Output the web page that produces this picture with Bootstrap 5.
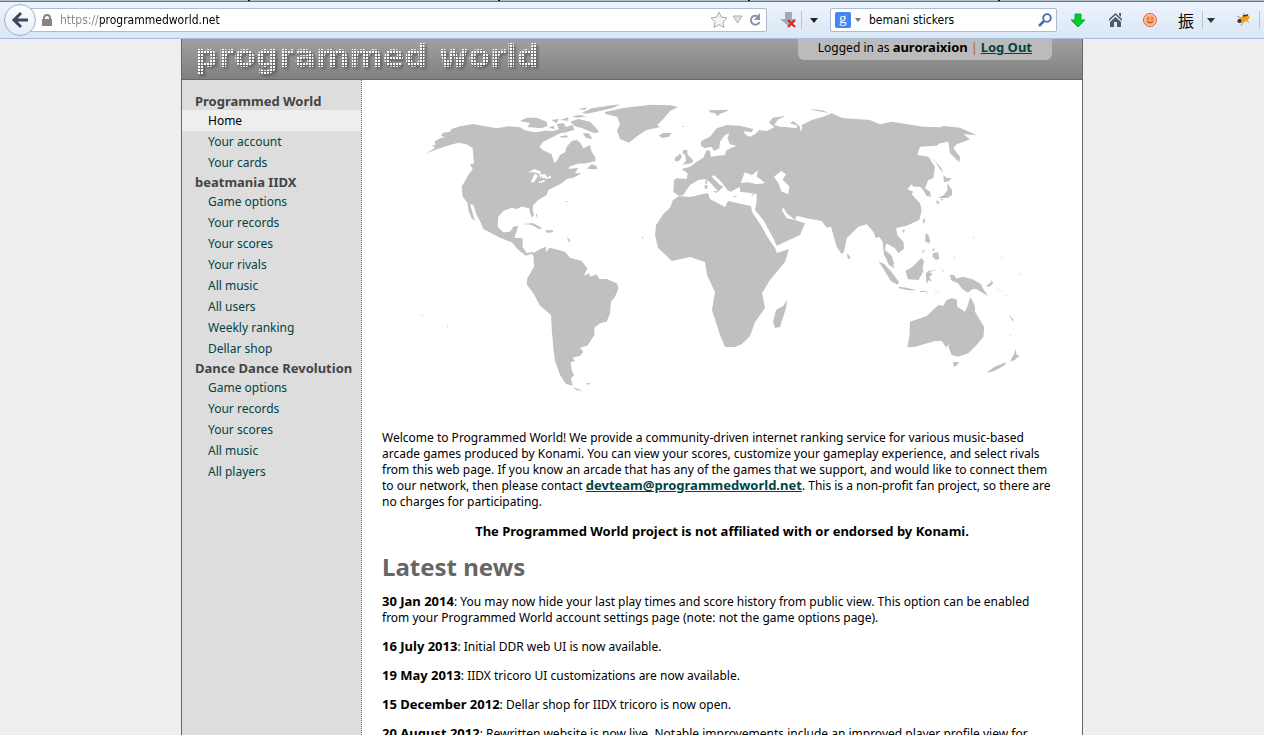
<!DOCTYPE html>
<html lang="en">
<head>
<meta charset="utf-8">
<meta name="viewport" content="width=device-width, initial-scale=1">
<title>Programmed World</title>
<link href="https://cdn.jsdelivr.net/npm/bootstrap@5.3.0/dist/css/bootstrap.min.css" rel="stylesheet">
<style>
body{font:12px/16px "Noto Sans",Tahoma,sans-serif;background:#eee;color:#000}
a{color:#044}
.chrome{height:39px;margin-top:-2px;padding:2px 0 0 4px;background:linear-gradient(#eef4fc,#dae7f6);border-bottom:1px solid #a5bedb;font-family:"DejaVu Sans Condensed",Tahoma,sans-serif}
.tabstrip{height:2px;background:#b4c4ce;border-bottom:1px solid #66727c;z-index:2}
.tabstrip i{width:250px;border-right:2px solid #10161c}
.tabstrip i:last-child{flex:1;border:0}
.chrome button{border:0;background:none;padding:0;line-height:0}
.chrome .back-btn{width:32px;height:32px;border:1px solid #9fb1c6;border-radius:50%;background:linear-gradient(#fdfeff,#e4edf8);z-index:1}
.field{height:24px;background:#fff;border:1px solid #a9bcd2;border-radius:2px}
.url-field{margin-left:-6px;padding:0 4px 0 11px}
.field input{border:0;outline:0;background:none;min-width:0;padding:0;line-height:20px;font-size:12px;color:#000}
.field .url-input{background:linear-gradient(90deg,#888 40px,#000 40px);-webkit-background-clip:text;background-clip:text;color:transparent}
.search-field{width:227px;padding:0 4px}
.rule{width:1px;height:18px;background:#b5c4d6}
.tools{width:207px;padding-left:14px}
.icon-gap{margin-right:20px}
.kanji{font:16px/20px "Noto Sans CJK JP",sans-serif}
.site{width:100%;max-width:902px;border:solid #666;border-width:0 1px;background:#fff}
.site-head{height:41px;padding-left:13px;background:linear-gradient(#a0a0a0,#808080);border-bottom:1px solid #666}
.logo{filter:drop-shadow(2px 2px 1px #444)}
.logo text{font:bold 32px "DejaVu Sans",sans-serif}
.site b,.site .strong-link{font-size:13px;line-height:1;font-weight:700}
.login{height:21px;margin-right:30px;padding:1px 20px 0;background:#bbb;border-radius:0 0 6px 6px}
.login span{color:#a60}
.side{width:180px;flex:none;background:#ddd;border-right:1px dotted #777;padding-top:12px}
.side h2{font-size:13px;line-height:18px;font-weight:700;color:#444;margin:0;padding-left:13px}
.side a{display:block;line-height:21px;padding-left:26px;text-decoration:none}
.side a.active{background:#eee;color:#000}
.main-col{padding:15px 20px 0}
.main-col p{margin-bottom:13px}
.main-col p:not(.notice){padding-right:7px}
.main-col .notice{font-size:13px;font-weight:700}
.main-col h1{font-size:24px;line-height:29px;font-weight:700;color:#666;margin-bottom:13px}
.map{width:100%;max-width:600px;margin-bottom:30px}
</style>
</head>
<body>
<div class="vh-100 d-flex flex-column overflow-hidden">
<div class="tabstrip d-flex flex-shrink-0"><i></i><i></i><i></i><i></i><i></i></div>
<header class="chrome d-flex align-items-center flex-shrink-0">
  <button class="back-btn flex-shrink-0" aria-label="Back"><svg width="18" height="18" viewBox="0 0 18 18" fill="none" stroke="#3d4a5c" stroke-width="3"><path d="M10 2 3 9l7 7M3 9h14"/></svg></button>
  <div class="field url-field d-flex align-items-center flex-grow-1">
    <svg class="flex-shrink-0 me-2" width="10" height="13" viewBox="0 0 10 13"><path d="M2 6V4a3 3 0 0 1 6 0v2" fill="none" stroke="#858585" stroke-width="2"/><path d="M0 5h10v7H0z" fill="#858585"/></svg>
    <input class="url-input flex-grow-1" aria-label="Address" value="https://programmedworld.net">
    <button aria-label="Bookmark"><svg width="18" height="18" viewBox="0 0 18 18"><path d="m9 1 2.4 5.2 5.6.7-4 3.9 1 5.7-5-2.8-5 2.8 1-5.7-4-3.9 5.6-.7z" fill="#f4f4f4" stroke="#aaa"/></svg></button>
    <button class="ms-1" aria-label="History"><svg width="12" height="10" viewBox="0 0 12 10"><path d="M1 1h9L5.500 8z" fill="#dde3ea" stroke="#a8b0ba"/></svg></button>
    <button class="ms-1" aria-label="Reload"><svg width="14" height="14" viewBox="0 0 14 14"><path d="M10 3.500A4.500 4.500 0 1 0 11.500 9" fill="none" stroke="#8796a5" stroke-width="2"/><path d="M12 0v7H6z" fill="#8796a5"/></svg></button>
  </div>
  <button class="ms-2 ps-1" aria-label="Downloads"><svg width="18" height="18" viewBox="0 0 18 18"><path d="M6 1h7v7h4l-7.500 7L1 8h5z" fill="#a4a9af"/><path d="m9 9 7 7m0-7-7 7" stroke="#e22" stroke-width="2.200"/></svg></button>
  <i class="rule ms-1"></i>
  <button class="mx-2" aria-label="More"><svg width="8" height="5"><path d="M0 0h8L4 5z" fill="#222"/></svg></button>
  <div class="field search-field d-flex align-items-center flex-shrink-0 ms-1">
    <svg class="flex-shrink-0" width="16" height="16"><rect width="16" height="16" rx="2" fill="#4285f4"/><text x="4" y="11" fill="#fff" font-size="15" font-family="Liberation Serif">g</text></svg>
    <svg class="flex-shrink-0 ms-1 me-2" width="6" height="4"><path d="M0 0h6L3 4z" fill="#777"/></svg>
    <input class="flex-grow-1" aria-label="Search" value="bemani stickers">
    <button aria-label="Search"><svg width="14" height="14" viewBox="0 0 14 14" fill="none" stroke="#3f72ad"><circle cx="9" cy="5" r="3.800" stroke-width="1.800"/><path d="m6 8-5 5" stroke-width="2.500"/></svg></button>
  </div>
  <div class="tools d-flex align-items-center flex-shrink-0">
    <button aria-label="Save"><svg width="14" height="15"><path d="M4 1h6v6h4l-7 7-7-7h4z" fill="#0c2" stroke="#0a4"/></svg></button>
    <button class="icon-gap ms-4" aria-label="Home"><svg width="13" height="16" viewBox="1 0 13 16" fill="#4e5a67"><path d="M7.500 1 15 8l-1 1-6.500-6L1 9 0 8z"/><path d="m2 10 5.500-5L13 10v5h-4v-5H6v5H2zM11 1h2v4l-2-2z"/></svg></button>
    <button class="icon-gap" aria-label="Smile"><svg width="16" height="16" viewBox="0 0 16 16"><circle cx="8" cy="8" r="6.500" fill="#fba46e" stroke="#e0604a"/><circle cx="8" cy="8" r="5.300" fill="none" stroke="#ffd0a8"/><path d="M5 9q3 3.500 6 0M6 5.500v2m4-2v2" fill="none" stroke="#a33a20"/></svg></button>
    <button class="kanji" aria-label="Kanji">振</button>
    <i class="rule ms-2"></i>
    <button class="icon-gap ms-1" aria-label="More"><svg width="8" height="5"><path d="M0 0h8L4 5z" fill="#333"/></svg></button>
    <button aria-label="Firebug"><svg width="16" height="16"><path d="m2 4 4 2M9 1l-1 4M2 9h4m0 5 2-4m6 1-3-3" stroke="#999"/><ellipse cx="9" cy="7" rx="6" ry="3" transform="rotate(-25 9 7)" fill="#f49b22"/><path d="m8 4 5-1" stroke="#433" stroke-width="1.500"/><circle cx="4.500" cy="9" r="2" fill="#333"/></svg></button>
    <i class="rule ms-2"></i>
  </div>
</header>
<div class="site mx-auto flex-grow-1 d-flex flex-column">
  <div class="site-head d-flex justify-content-between align-items-start flex-shrink-0">
    <svg class="logo" width="360" height="40" role="img" aria-label="programmed world"><defs><pattern id="dots" width="3" height="3" patternUnits="userSpaceOnUse"><rect width="2" height="2" fill="#fff"/></pattern></defs><text x="0" y="28" fill="url(#dots)">programmed world</text></svg>
    <div class="login text-nowrap">Logged in as <b>auroraixion</b> <span>|</span> <a class="strong-link" href="#">Log Out</a></div>
  </div>
  <div class="d-flex flex-grow-1">
    <nav class="side">
      <h2>Programmed World</h2>
      <a class="active" href="#">Home</a><a href="#">Your account</a><a href="#">Your cards</a>
      <h2>beatmania IIDX</h2>
      <a href="#">Game options</a><a href="#">Your records</a><a href="#">Your scores</a><a href="#">Your rivals</a><a href="#">All music</a><a href="#">All users</a><a href="#">Weekly ranking</a><a href="#">Dellar shop</a>
      <h2>Dance Dance Revolution</h2>
      <a href="#">Game options</a><a href="#">Your records</a><a href="#">Your scores</a><a href="#">All music</a><a href="#">All players</a>
    </nav>
    <main class="main-col flex-grow-1">
      <svg class="map d-block mx-auto" viewBox="0 0 1800 915" fill="#c0c0c0" role="img" aria-label="World map">
        <!-- North America -->
        <g transform="translate(-6 0)">
          <path d="M18 175 40 162 45 158 37 152 47 148 43 140 60 130 75 127 62 122 70 113 90 110 95 102 120 94 160 87 195 94 230 100 265 94 300 97 315 106 345 112 375 107 400 108 425 100 445 100 440 112 420 115 400 125 370 140 358 155 368 165 395 178 403 205 412 195 420 180 435 172 440 155 455 138 470 135 482 145 490 160 510 150 515 170 525 185 527 198 500 205 475 206 450 214 445 222 475 218 465 235 485 235 460 248 440 252 425 265 405 275 385 285 380 300 355 315 340 330 338 345 342 360 336 368 330 355 328 340 305 335 290 342 275 338 250 348 235 365 233 395 250 412 270 410 280 395 295 392 288 415 283 428 308 430 308 455 320 475 338 470 345 480 340 484 336 476 318 482 295 465 275 442 240 428 190 402 183 385 170 360 160 330 150 328 165 378 155 370 145 345 143 325 128 305 125 275 145 240 158 222 150 208 162 205 158 160 140 148 115 143 90 150 60 160Z"/>
          <path d="m300 78 20-10 30 0 30 12 2 14-20 6-40-4 8-12zM395 75l22-4-8 14zM420 75l25-8 0 10zM385 98l15-6 5 10zM410 88l20-4 8 12 20-6 5 15-20 5-25-5zM450 80l25-8 35 8 15 15 12 15-12 5-20-8-20-8-20-5zM455 64l25-4 20 4-30 4zM475 42l25-5-5 8zM485 54l30-14 50-8 35-4-20 10-40 10-40 8zM488 115l18 0 12 18-20-5zM420 124l20-3 5 6-20 1zM515 207l-14 14 30 2 0-8zM310 387l28-3 30 16-12 2-20-12zM376 406l22 0 2 6-20 1zM347 355l5 4-1 10-2-5zM365 380l6 5zM341 414l12 0zM408 410l7 0zM437 318l5 0 0 3-5 0z"/>
          <path fill="#fff" d="m325 232 18-10 20 8-2 8-18-6zM332 262l12-26 10 6-12 20zM358 238l18 0 6 10-14 2-4-8-2 10zM356 260l18-5 0 5-16 4zM375 250l18-8 0 7-16 3z"/>
        </g>
        <!-- Greenland -->
        <path d="m549 51 54-12 84-10 60 2 21 5-24 12-18 22-21 20 9 6-42 10-30 20-21 17-27-11-9-25 9-20-9-22-35-8z"/>
        <!-- South America -->
        <path transform="translate(234 420)" d="M100 55 120 42 138 35 138 52 148 38 165 42 195 50 210 68 245 78 262 100 252 122 268 115 270 125 290 118 298 132 320 132 350 145 356 160 345 185 333 200 330 235 320 260 300 265 283 278 283 300 262 332 240 338 250 350 240 362 218 368 225 378 212 382 215 405 222 420 213 430 218 452 198 447 180 420 175 405 165 378 160 340 155 280 153 240 120 212 100 175 80 148 82 130 102 95ZM218 455l30 12-18-1zM258 444l14 0-6 6zM200 5l10 10-2 10zM205 35l-6 10z"/>
        <!-- Africa -->
        <path transform="scale(3) translate(-422 -95)" d="M679 196 690 197 708 193 710 199 725 207 728 201 737 203 751 206 752 212 762 227 768 238 775 248 777 253 789 249 785 262 770 280 762 293 765 308 755 322 750 336 742 344 735 347 725 347 720 335 712 310 715 292 707 275 705 262 690 257 672 261 658 248 655 235 656 225 664 213 670 208 673 200ZM787 300 786 308 780 327 775 328 773 322 776 310 783 306Z"/>
        <g transform="translate(654 0)">
          <!-- Europe and Asia -->
          <path d="M100 290 102 255 110 250 140 252 143 235 125 222 150 215 170 200 190 188 200 165 210 168 212 185 235 182 255 180 260 165 290 152 270 148 262 130 268 115 255 120 240 140 238 160 222 168 215 155 195 160 183 152 183 138 210 125 230 100 260 90 300 92 340 102 335 112 310 108 318 120 330 125 345 118 358 105 380 108 400 98 430 95 470 100 472 92 450 85 460 78 480 95 482 110 487 98 485 90 515 75 550 65 575 55 605 68 615 70 690 75 720 88 755 80 850 95 900 97 910 93 960 98 1010 120 970 118 990 133 950 148 940 160 960 185 958 202 930 175 925 140 900 145 890 152 840 155 832 180 865 185 885 215 880 250 865 255 855 280 870 290 873 305 860 303 850 285 840 275 820 275 815 268 802 283 820 290 815 298 840 325 845 345 838 375 800 392 785 395 768 400 772 420 790 440 793 460 775 475 765 460 738 445 735 465 755 482 762 505 758 513 745 502 732 480 728 440 718 425 708 430 700 410 680 388 655 395 620 430 612 470 605 478 590 455 573 395 560 398 545 378 500 370 470 362 465 375 440 355 430 338 425 345 440 370 465 375 495 385 480 420 410 452 400 430 370 375 345 345 350 320 350 297 325 293 300 290 300 275 272 290 262 285 245 262 222 240 215 245 240 270 250 275 235 290 210 262 195 252 175 255 150 270 130 300 115 302Z"/>
          <path fill="#fff" d="m302 264 12-32 22 8 18-14-4 18 25 20-25 4-25-6zM402 245l22-17 14 10-10 16 20 20-3 23-20-7-10-25z"/>
          <path d="m56 122 14-8 25 0-8 11-20 4zM104 190l16-14 6 6-6 14-14 4zM130 165l12 0 0 12 18 20-6 8-26 4 10-12-2-16-8-6zM206 46l62-2-14 8-14 4-6 8-10-10-14-2zM387 82l12-14 38-6-24 12-10 16 20 6-18 4zM507 42l40 4 20 8-40-7zM196 256l5 0 0 10-5 0zM194 270l8 0 0 12-8-2zM220 288l14 0-6 7zM278 302l16 3-12 1zM332 300l12-4-6 7zM128 92l4 0 0 4-4 0z"/>
          <!-- Japan, Philippines, Sri Lanka -->
          <path transform="translate(540 0)" d="m333 188 12 10 18 20 8 18-12-14-12-20zM370 240l10 8 14 2-6 8-16 4zM382 265l14 20 0 15-12 8-12 2-18-2 18-8 10-14zM346 316l12 4-4 10zM362 312l8 0-6 6zM310 372l6 0-4 14-4-4zM246 406l10-2-6 10zM317 415l8 5 6 18-4 8-12-8zM330 448l6 5zM342 452l8 10zM338 475l16-4 4 20-10 4-10-8zM318 462l-12 14 2-8zM335 465l10-6-4 10zM82 474l10 14-6 5-4-8z"/>
        </g>
        <!-- Indonesia, Australia, New Zealand -->
        <path transform="translate(1254 435)" d="M210 245 260 228 295 195 310 197 320 180 335 175 350 178 352 200 375 215 382 200 390 172 397 180 405 200 405 215 433 262 430 290 410 315 385 340 355 350 335 345 325 320 330 312 318 322 305 303 285 303 225 320 202 322 208 290ZM340 365l18 2-10 12-8 0zM442 396l22-16 35-14-5 10-30 16-20 6zM510 365l8-16 4-6 4-16 4 17 9 3-14 12zM115 64l18 8 20 22 24 32-4 8-20-10-18-30zM175 140l24 3 32 8-26 0-28-6zM134 42l20 18 10 26-18-12zM196 92l20-10 28-28 8 10-4 18 2 12-14 26-32-2zM258 100l8-8 24-2-22 6 10 6-10 8 8 16-10-6-6 12-2-14zM240 153l20 0 0 3-20 0zM265 155l-4 4 0 4zM280 162l18-8-10 3zM307 84l4 8-2 8zM312 117l8 2zM330 104l14 2 4 10 20-6 30 8 24 14 6 12 16 24-24-14-12-8-12 2-12 10-18-12-12-16-18-8-4-4zM438 138l16-12-4-8 10 10-10 12zM465 140l10 8 10 4 18 18-4-6-16-12-10-4zM504 223l18 18-4 2zM530 198l8 10z"/>
        <!-- Small islands -->
        <path d="M0 659h3v3H0zM1596 485h3v3h-3zM1737 485h3v3h-3zM1653 427h3v3h-3zM1794 536h3v3h-3zM1764 721h3v3h-3zM660 425h3v5h-3zM75 693h3v3h-3z"/>
      </svg>
      <p>Welcome to Programmed World! We provide a community-driven internet ranking service for various music-based arcade games produced by Konami. You can view your scores, customize your gameplay experience, and select rivals from this web page. If you know an arcade that has any of the games that we support, and would like to connect them to our network, then please contact <a class="strong-link" href="#">devteam@programmedworld.net</a>. This is a non-profit fan project, so there are no charges for participating.</p>
      <p class="notice text-center">The Programmed World project is not affiliated with or endorsed by Konami.</p>
      <h1>Latest news</h1>
      <p><b>30 Jan 2014</b>: You may now hide your last play times and score history from public view. This option can be enabled from your Programmed World account settings page (note: not the game options page).</p>
      <p><b>16 July 2013</b>: Initial DDR web UI is now available.</p>
      <p><b>19 May 2013</b>: IIDX tricoro UI customizations are now available.</p>
      <p><b>15 December 2012</b>: Dellar shop for IIDX tricoro is now open.</p>
      <p><b>20 August 2012</b>: Rewritten website is now live. Notable improvements include an improved player profile view for</p>
    </main>
  </div>
</div>
</div>
<script src="https://cdn.jsdelivr.net/npm/bootstrap@5.3.0/dist/js/bootstrap.bundle.min.js"></script>
</body>
</html>
